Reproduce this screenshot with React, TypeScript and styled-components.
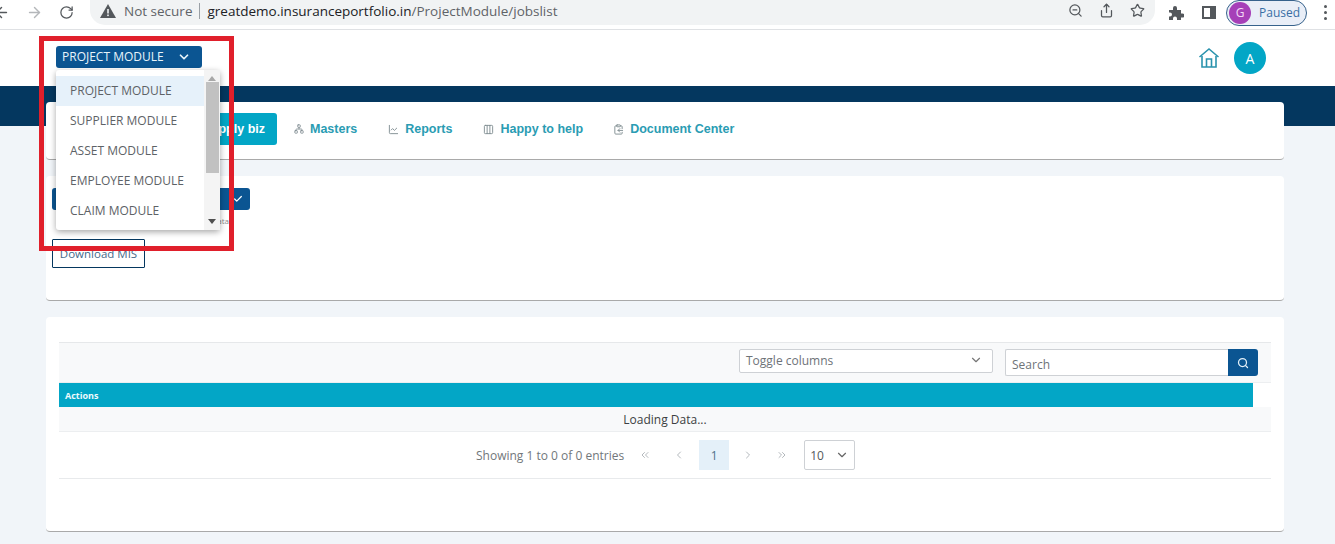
import React from 'react'
import styled, { createGlobalStyle } from 'styled-components'
import {
  ArrowLeft,
  ArrowRight,
  RotateCw,
  ZoomOut,
  Share,
  Star,
  ChevronDown,
  ChevronLeft,
  ChevronRight,
  ChevronsLeft,
  ChevronsRight,
  Check,
  Search,
  Network,
  LineChart,
  Columns3,
  ClipboardCopy,
} from 'lucide-react'

const navy = '#04375f'
const blue = '#0b5592'
const cyan = '#03a6c6'
const navText = '#2a9cb3'

const GlobalStyle = createGlobalStyle`
  html, body {
    margin: 0;
    padding: 0;
    height: 544px;
    overflow: hidden;
    background: #f1f5f9;
    font-family: "Open Sans", "Liberation Sans", sans-serif;
  }
`

const Page = styled.div`
  position: relative;
  width: 1335px;
  height: 544px;
  overflow: hidden;
`

/* browser chrome */
const BrowserBar = styled.div`
  height: 29px;
  display: flex;
  align-items: center;
  background: #fff;
  border-bottom: 1px solid #dfe1e4;
  padding-bottom: 4px;
  box-sizing: border-box;
  height: 30px;
`

const NavIcons = styled.div`
  display: flex;
  align-items: center;
  gap: 16px;
  margin-left: -7px;
  width: 97px;
  flex: none;
  color: #54585c;
`

const UrlPill = styled.div`
  width: 1065px;
  height: 29px;
  margin-top: -4px;
  flex: none;
  display: flex;
  align-items: center;
  background: #f1f3f4;
  border-radius: 0 0 15px 15px;
  box-sizing: border-box;
  padding: 0 10px 0 10px;
  font-size: 13.5px;
  color: #5f6368;
`

const NotSecure = styled.span`
  margin-left: 8px;
  padding-right: 7px;
  border-right: 1px solid #9aa0a6;
  line-height: 16px;
`

const Host = styled.span`
  margin-left: 7px;
  color: #202124;
`

const PillIcons = styled.div`
  margin-left: auto;
  display: flex;
  align-items: center;
  gap: 16px;
  color: #54585c;
`

const BarRight = styled.div`
  display: flex;
  align-items: center;
  margin-left: 13px;
  color: #54585c;
`

const Sidebar = styled.span`
  display: block;
  width: 14px;
  height: 13px;
  box-sizing: border-box;
  border: 2px solid #54585c;
  border-right-width: 6px;
  margin-left: 18px;
`

const Profile = styled.div`
  margin-left: 10px;
  width: 81px;
  height: 26px;
  box-sizing: border-box;
  border: 1px solid #37628c;
  border-radius: 13px;
  background: #e9eef7;
  display: flex;
  align-items: center;
  font-size: 12px;
  color: #3a6ea5;
`

const ProfileBadge = styled.span`
  width: 22px;
  height: 22px;
  margin: 0 8px 0 2px;
  border-radius: 50%;
  background: #a63fb8;
  color: #f3d9f7;
  display: flex;
  align-items: center;
  justify-content: center;
`

const Dots = styled.div`
  margin-left: 17px;
  display: flex;
  flex-direction: column;
  gap: 3px;

  span {
    width: 3px;
    height: 3px;
    border-radius: 50%;
    background: #54585c;
  }
`

/* app header */
const Header = styled.header`
  height: 56px;
  background: #fff;
  display: flex;
  align-items: center;
  justify-content: space-between;
  padding: 0 69px 0 56px;
`

const ModuleButton = styled.button`
  width: 146px;
  height: 22px;
  margin-top: -3px;
  border: 0;
  border-radius: 3px;
  background: ${blue};
  color: #e8f4fb;
  display: flex;
  align-items: center;
  padding: 0 9px 0 6px;
  gap: 13px;
  font: 12px "Open Sans", sans-serif;
  white-space: nowrap;
`

const HeaderRight = styled.div`
  display: flex;
  align-items: center;
  gap: 14px;
`

const Avatar = styled.div`
  width: 32px;
  height: 32px;
  border-radius: 50%;
  background: ${cyan};
  color: #fff;
  display: flex;
  align-items: center;
  justify-content: center;
  font-size: 14px;
`

const Band = styled.div`
  height: 40px;
  background: ${navy};
`

const Content = styled.main`
  margin-top: -24px;
  padding: 0 51px 0 46px;
  display: flex;
  flex-direction: column;
  gap: 16px;
`

const Card = styled.section<{ $height: number }>`
  height: ${(p) => p.$height}px;
  box-sizing: border-box;
  background: #fff;
  border-radius: 4px;
  border-bottom: 1px solid #a9a9a9;
`

/* top navigation */
const NavCard = styled(Card)`
  display: flex;
  align-items: center;
  padding: 0 0 3px 129px;
`

const ApplyButton = styled.div`
  width: 102px;
  height: 32px;
  box-sizing: border-box;
  padding-right: 12px;
  border-radius: 3px;
  background: ${cyan};
  color: #fff;
  display: flex;
  align-items: center;
  justify-content: flex-end;
  font: bold 12.5px "Liberation Sans", sans-serif;
`

const NavItem = styled.div<{ $gap: number }>`
  display: flex;
  align-items: center;
  gap: 6px;
  margin-left: ${(p) => p.$gap}px;
  color: ${navText};
  font: bold 12.5px "Liberation Sans", sans-serif;

  svg {
    color: #7f8c91;
  }
`

/* filter card */
const FilterCard = styled(Card)`
  padding: 12px 6px 0;
`

const PickButton = styled.div`
  width: 198px;
  height: 22px;
  border-radius: 3px;
  background: ${blue};
  color: #fff;
  display: flex;
  align-items: center;
  justify-content: flex-end;
  padding-right: 7px;
  box-sizing: border-box;
`

const Caption = styled.div`
  width: 177px;
  margin-top: 5px;
  font-size: 8px;
  line-height: 11px;
  text-align: right;
  color: #8a8a8a;
`

const DownloadButton = styled.button`
  display: block;
  margin-top: 13px;
  width: 93px;
  height: 29px;
  box-sizing: border-box;
  padding: 0;
  background: #fff;
  border: 1px solid ${navy};
  border-radius: 1px;
  color: #45698a;
  font: 11.5px "Open Sans", sans-serif;
`

/* table card */
const TableCard = styled(Card)`
  padding: 25px 13px 0;
`

const Toolbar = styled.div`
  height: 41px;
  box-sizing: border-box;
  background: #f8f9fa;
  border-top: 1px solid #e6e8ea;
  border-bottom: 1px solid #eceef0;
  display: flex;
  align-items: flex-start;
  justify-content: flex-end;
  padding: 6px 13px 0 0;
`

const ToggleSelect = styled.div`
  width: 254px;
  height: 24px;
  box-sizing: border-box;
  padding: 0 9px 2px 6px;
  background: #fff;
  border: 1px solid #ced1d5;
  border-radius: 2px;
  display: flex;
  align-items: center;
  justify-content: space-between;
  color: #6e7378;
  font-size: 12px;
`

const SearchBox = styled.div`
  margin-left: 12px;
  width: 253px;
  height: 27px;
  display: flex;
`

const SearchInput = styled.div`
  flex: 1;
  box-sizing: border-box;
  padding: 3px 0 0 6px;
  background: #fff;
  border: 1px solid #ced1d5;
  border-right: 0;
  border-radius: 2px 0 0 2px;
  color: #6e7378;
  font-size: 12px;
  display: flex;
  align-items: center;
`

const SearchButton = styled.div`
  width: 30px;
  background: ${blue};
  color: #e4f0f8;
  border-radius: 0 3px 3px 0;
  display: flex;
  align-items: center;
  justify-content: center;
`

const TableHead = styled.div`
  width: 1194px;
  height: 24px;
  box-sizing: border-box;
  padding-left: 6px;
  background: ${cyan};
  color: #eefafd;
  display: flex;
  align-items: center;
  font-size: 9px;
  font-weight: 700;
`

const LoadingRow = styled.div`
  height: 25px;
  box-sizing: border-box;
  background: #f8f9fa;
  border-bottom: 1px solid #eceef0;
  display: flex;
  align-items: center;
  justify-content: center;
  color: #3c3f42;
  font-size: 12px;
`

const Pager = styled.div`
  height: 47px;
  box-sizing: border-box;
  border-bottom: 1px solid #e8eaec;
  display: flex;
  align-items: center;
  padding: 0 0 0 417px;
  color: #72777b;
  font-size: 12px;
`

const PagerIcon = styled.span<{ $left: number }>`
  display: flex;
  margin-left: ${(p) => p.$left}px;
  color: #b4b9bd;
`

const PageNumber = styled.span`
  width: 30px;
  height: 30px;
  margin-left: 14px;
  background: #e4f0f9;
  color: #52708a;
  display: flex;
  align-items: center;
  justify-content: center;
`

const PageSize = styled.div`
  width: 51px;
  height: 30px;
  margin-left: 16px;
  box-sizing: border-box;
  border: 1px solid #ced1d5;
  border-radius: 2px;
  padding: 0 5px;
  display: flex;
  align-items: center;
  justify-content: space-between;
  color: #55595d;
`

/* open dropdown, lies over the page */
const Menu = styled.div`
  position: absolute;
  left: 56px;
  top: 70px;
  width: 164px;
  height: 160px;
  background: #fff;
  border-radius: 3px;
  box-shadow: 0 2px 6px rgba(0, 0, 0, 0.35);
  display: flex;
`

const MenuList = styled.ul`
  flex: 1;
  margin: 0;
  padding: 6px 0 0;
  list-style: none;
`

const MenuItem = styled.li<{ $active?: boolean }>`
  height: 29.8px;
  display: flex;
  align-items: center;
  padding-left: 14px;
  font-size: 12px;
  color: #5d6266;
  background: ${(p) => (p.$active ? '#e6f1fa' : 'transparent')};
`

const Scrollbar = styled.div`
  width: 16px;
  background: #f4f4f4;
  display: flex;
  flex-direction: column;
  align-items: center;
  padding-top: 6px;
  box-sizing: border-box;
`

const ArrowUp = styled.span`
  border: 4px solid transparent;
  border-top: 0;
  border-bottom: 5px solid #a8a8a8;
`

const Thumb = styled.span`
  width: 13px;
  height: 91px;
  margin-top: 1px;
  background: #c1c1c1;
`

const ArrowDown = styled.span`
  margin-top: auto;
  margin-bottom: 6px;
  border: 4px solid transparent;
  border-bottom: 0;
  border-top: 5px solid #505050;
`

/* annotation painted over the screenshot */
const Annotation = styled.div`
  position: absolute;
  left: 39px;
  top: 36px;
  width: 195px;
  height: 215px;
  box-sizing: border-box;
  border: 5px solid #e01f2b;
`

const HomeIcon = () => (
  <svg width="22" height="22" viewBox="0 0 22 22" fill="none" stroke="#2a93ad" strokeWidth="1.6">
    <path d="M1.5 10 11 2l9.5 8" />
    <path d="M4 9v11h14V9" />
    <path d="M8.5 20v-8h5v8" />
  </svg>
)

const PuzzleIcon = () => (
  <svg width="16" height="16" viewBox="0 0 16 16" fill="#54585c">
    <path d="M1 5h4V3a2 2 0 0 1 4 0v2h4v3.5h1.500a2 2 0 0 1 0 4H13V15H9v-1.500a2 2 0 0 0-4 0V15H1v-3.500h1a2 2 0 0 0 0-4H1z" />
  </svg>
)

const WarningIcon = () => (
  <svg width="16" height="14" viewBox="0 0 16 14" fill="#54585c">
    <path d="M8 0 16 14H0z" />
    <rect x="7.200" y="5" width="1.600" height="4.500" fill="#f1f3f4" />
    <rect x="7.200" y="10.500" width="1.600" height="1.600" fill="#f1f3f4" />
  </svg>
)

const modules = [
  'PROJECT MODULE',
  'SUPPLIER MODULE',
  'ASSET MODULE',
  'EMPLOYEE MODULE',
  'CLAIM MODULE',
]

const App = () => {
  return (
    <Page>
      <GlobalStyle />
      <BrowserBar>
        <NavIcons>
          <ArrowLeft size={17} />
          <ArrowRight size={17} color="#b4b7ba" />
          <RotateCw size={15} />
        </NavIcons>
        <UrlPill>
          <WarningIcon />
          <NotSecure>Not secure</NotSecure>
          <Host>
            greatdemo.insuranceportfolio.in
            <span style={{ color: '#5f6368' }}>/ProjectModule/jobslist</span>
          </Host>
          <PillIcons>
            <ZoomOut size={15} />
            <Share size={15} />
            <Star size={15} />
          </PillIcons>
        </UrlPill>
        <BarRight>
          <PuzzleIcon />
          <Sidebar />
          <Profile>
            <ProfileBadge>G</ProfileBadge>
            Paused
          </Profile>
          <Dots>
            <span />
            <span />
            <span />
          </Dots>
        </BarRight>
      </BrowserBar>

      <Header>
        <ModuleButton>
          PROJECT MODULE
          <ChevronDown size={14} strokeWidth={3} />
        </ModuleButton>
        <HeaderRight>
          <HomeIcon />
          <Avatar>A</Avatar>
        </HeaderRight>
      </Header>
      <Band />

      <Content>
        <NavCard $height={58}>
          <ApplyButton>Apply biz</ApplyButton>
          <NavItem $gap={17}>
            <Network size={10} />
            Masters
          </NavItem>
          <NavItem $gap={31}>
            <LineChart size={11} />
            Reports
          </NavItem>
          <NavItem $gap={31}>
            <Columns3 size={11} />
            Happy to help
          </NavItem>
          <NavItem $gap={30}>
            <ClipboardCopy size={11} />
            Document Center
          </NavItem>
        </NavCard>

        <FilterCard $height={125}>
          <PickButton>
            <Check size={10} strokeWidth={3} />
          </PickButton>
          <Caption>Select to export data</Caption>
          <DownloadButton>Download MIS</DownloadButton>
        </FilterCard>

        <TableCard $height={215}>
          <Toolbar>
            <ToggleSelect>
              Toggle columns
              <ChevronDown size={14} color="#777" />
            </ToggleSelect>
            <SearchBox>
              <SearchInput>Search</SearchInput>
              <SearchButton>
                <Search size={12} strokeWidth={2.5} />
              </SearchButton>
            </SearchBox>
          </Toolbar>
          <TableHead>Actions</TableHead>
          <LoadingRow>Loading Data...</LoadingRow>
          <Pager>
            Showing 1 to 0 of 0 entries
            <PagerIcon $left={15}>
              <ChevronsLeft size={12} />
            </PagerIcon>
            <PagerIcon $left={22}>
              <ChevronLeft size={12} />
            </PagerIcon>
            <PageNumber>1</PageNumber>
            <PagerIcon $left={13}>
              <ChevronRight size={12} />
            </PagerIcon>
            <PagerIcon $left={22}>
              <ChevronsRight size={12} />
            </PagerIcon>
            <PageSize>
              10
              <ChevronDown size={14} color="#666" />
            </PageSize>
          </Pager>
        </TableCard>
      </Content>

      <Menu>
        <MenuList>
          {modules.map((name, i) => (
            <MenuItem key={name} $active={i === 0}>
              {name}
            </MenuItem>
          ))}
        </MenuList>
        <Scrollbar>
          <ArrowUp />
          <Thumb />
          <ArrowDown />
        </Scrollbar>
      </Menu>
      <Annotation />
    </Page>
  )
}

export default App
